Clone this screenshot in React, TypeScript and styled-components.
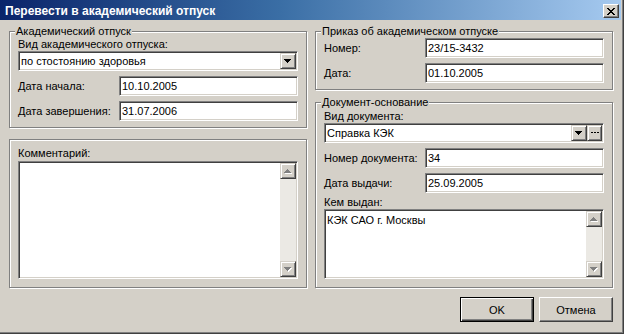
import React from 'react';
import styled, { createGlobalStyle } from 'styled-components';

const GlobalStyle = createGlobalStyle`
  html, body { margin: 0; padding: 0; background: #d4d0c8; }
  body { font-family: "Liberation Sans", Arial, sans-serif; font-size: 11px; color: #000; }
  * { box-sizing: border-box; }
`;

const Window = styled.div`
  width: 624px;
  height: 334px;
  display: flex;
  flex-direction: column;
  background: #d4d0c8;
  border-right: 1px solid #404040;
  border-bottom: 1px solid #404040;
  box-shadow: inset -1px -1px 0 #808080;
  padding-right: 2px;
  overflow: hidden;
`;

const TitleBar = styled.div`
  height: 20px;
  flex: none;
  display: flex;
  align-items: center;
  padding: 2px 2px 0 5px;
  background: linear-gradient(to right, #0a246a 0%, #3a6ea5 45%, #a6caf0 100%);
`;

const Title = styled.div`
  color: #fff;
  font-weight: bold;
  font-size: 12px;
  line-height: 14px;
  white-space: nowrap;
`;

const CloseButton = styled.button`
  margin-left: auto;
  width: 16px;
  height: 14px;
  padding: 0;
  display: flex;
  align-items: center;
  justify-content: center;
  background: #d4d0c8;
  border: 1px solid;
  border-color: #fff #404040 #404040 #fff;
  box-shadow: inset -1px -1px 0 #808080;
`;

const Body = styled.div`
  flex: 1;
  display: flex;
  flex-direction: column;
  padding: 5px 8px 0 9px;
`;

const Columns = styled.div`
  display: flex;
  gap: 8px;
  align-items: flex-start;
`;

const Column = styled.div`
  width: 298px;
  display: flex;
  flex-direction: column;
`;

const Group = styled.fieldset<{ $pt?: number; $pb: number; $mt?: number }>`
  margin: ${p => p.$mt ?? 0}px 0 0 0;
  min-width: 0;
  width: 298px;
  border: 1px solid #808080;
  box-shadow: 1px 1px 0 #fff, inset 1px 1px 0 #fff;
  padding: ${p => p.$pt ?? 0}px 8px ${p => p.$pb}px 8px;
  display: flex;
  flex-direction: column;
`;

const Legend = styled.legend`
  padding: 0 1px;
  margin-left: -3px;
  line-height: 13px;
  font-size: 11px;
  background: #d4d0c8;
`;

const Caption = styled.div<{ $mt?: number }>`
  margin-top: ${p => p.$mt ?? 0}px;
  line-height: 12px;
  white-space: nowrap;
`;

const Row = styled.div<{ $mt: number }>`
  margin-top: ${p => p.$mt}px;
  display: grid;
  grid-template-columns: 101px 1fr;
  align-items: center;
`;

const Label = styled.span`
  white-space: nowrap;
`;

const sunken = `
  background: #fff;
  border: 1px solid;
  border-color: #808080 #fff #fff #808080;
  box-shadow: inset 1px 1px 0 #404040, inset -1px -1px 0 #d4d0c8;
`;

const Input = styled.input`
  ${sunken}
  height: 20px;
  width: 100%;
  padding: 0 2px;
  font-family: inherit;
  font-size: 11px;
  color: #000;
  outline: none;
`;

const Combo = styled.div<{ $mt: number }>`
  ${sunken}
  margin-top: ${p => p.$mt}px;
  height: 20px;
  padding: 1px;
  display: flex;
  align-items: stretch;
`;

const ComboText = styled.div`
  flex: 1;
  padding-left: 1px;
  display: flex;
  align-items: center;
  white-space: nowrap;
`;

const raised = `
  background: #d4d0c8;
  border: 1px solid;
  border-color: #d4d0c8 #404040 #404040 #d4d0c8;
  box-shadow: inset 1px 1px 0 #fff, inset -1px -1px 0 #808080;
`;

const SmallButton = styled.div<{ $w: number }>`
  ${raised}
  width: ${p => p.$w}px;
  flex: none;
  display: flex;
  align-items: center;
  justify-content: center;
`;

const Memo = styled.div<{ $h: number; $mt: number }>`
  ${sunken}
  margin-top: ${p => p.$mt}px;
  height: ${p => p.$h}px;
  padding: 1px;
  display: flex;
`;

const MemoText = styled.div`
  flex: 1;
  padding: 2px 1px;
  line-height: 14px;
`;

const ScrollBar = styled.div`
  width: 16px;
  display: flex;
  flex-direction: column;
`;

const ScrollButton = styled.div`
  ${raised}
  height: 16px;
  flex: none;
  display: flex;
  align-items: center;
  justify-content: center;
`;

const Track = styled.div`
  flex: 1;
  background: #ebe9e4;
`;

const ButtonRow = styled.div`
  margin-top: 9px;
  display: flex;
  justify-content: flex-end;
  gap: 5px;
`;

const PushButton = styled.button<{ $default?: boolean }>`
  width: 74px;
  height: 25px;
  padding: 0;
  font-family: inherit;
  font-size: 11px;
  color: #000;
  background: #d4d0c8;
  border: 1px solid;
  border-color: ${p => (p.$default ? '#000' : '#fff #404040 #404040 #fff')};
  box-shadow: ${p =>
    p.$default
      ? 'inset 1px 1px 0 #fff, inset -1px -1px 0 #404040, inset -2px -2px 0 #808080'
      : 'inset -1px -1px 0 #808080'};
`;

const TriangleDown = ({ color = '#000', shadow }: { color?: string; shadow?: boolean }) => (
  <svg width="8" height="5" viewBox="0 0 8 5" shapeRendering="crispEdges">
    {shadow && <path d="M1 1h7v1H1z M2 2h5v1H2z M3 3h3v1H3z M4 4h1v1H4z" fill="#fff" />}
    <path d="M0 0h7v1H0z M1 1h5v1H1z M2 2h3v1H2z M3 3h1v1H3z" fill={color} />
  </svg>
);

const TriangleUp = ({ color = '#000', shadow }: { color?: string; shadow?: boolean }) => (
  <svg width="8" height="5" viewBox="0 0 8 5" shapeRendering="crispEdges">
    {shadow && <path d="M4 1h1v1H4z M3 2h3v1H3z M2 3h5v1H2z M1 4h7v1H1z" fill="#fff" />}
    <path d="M3 0h1v1H3z M2 1h3v1H2z M1 2h5v1H1z M0 3h7v1H0z" fill={color} />
  </svg>
);

const Dots = () => (
  <svg width="8" height="2" viewBox="0 0 8 2" shapeRendering="crispEdges">
    <path d="M0 0h2v1H0z M3 0h2v1H3z M6 0h2v1H6z" fill="#000" />
  </svg>
);

const CloseIcon = () => (
  <svg width="8" height="7" viewBox="0 0 8 7" shapeRendering="crispEdges">
    <path
      d="M0 0h2v1H0z M6 0h2v1H6z M1 1h2v1H1z M5 1h2v1H5z M2 2h4v1H2z M3 3h2v1H3z M2 4h4v1H2z M1 5h2v1H1z M5 5h2v1H5z M0 6h2v1H0z M6 6h2v1H6z"
      fill="#000"
    />
  </svg>
);

const Scroll = () => (
  <ScrollBar>
    <ScrollButton>
      <TriangleUp color="#808080" shadow />
    </ScrollButton>
    <Track />
    <ScrollButton>
      <TriangleDown color="#808080" shadow />
    </ScrollButton>
  </ScrollBar>
);

export default function App() {
  return (
    <>
      <GlobalStyle />
      <Window>
        <TitleBar>
          <Title>Перевести в академический отпуск</Title>
          <CloseButton aria-label="Закрыть">
            <CloseIcon />
          </CloseButton>
        </TitleBar>
        <Body>
          <Columns>
            <Column>
              <Group $pb={6}>
                <Legend>Академический отпуск</Legend>
                <Caption>Вид академического отпуска:</Caption>
                <Combo $mt={1}>
                  <ComboText>по стостоянию здоровья</ComboText>
                  <SmallButton $w={16}>
                    <TriangleDown />
                  </SmallButton>
                </Combo>
                <Row $mt={5}>
                  <Label>Дата начала:</Label>
                  <Input readOnly value="10.10.2005" />
                </Row>
                <Row $mt={5}>
                  <Label>Дата завершения:</Label>
                  <Input readOnly value="31.07.2006" />
                </Row>
              </Group>
              <Group $mt={11} $pt={7} $pb={8}>
                <Caption>Комментарий:</Caption>
                <Memo $mt={2} $h={118}>
                  <MemoText />
                  <Scroll />
                </Memo>
              </Group>
            </Column>
            <Column>
              <Group $pb={6}>
                <Legend>Приказ об академическом отпуске</Legend>
                <Row $mt={0}>
                  <Label>Номер:</Label>
                  <Input readOnly value="23/15-3432" />
                </Row>
                <Row $mt={5}>
                  <Label>Дата:</Label>
                  <Input readOnly value="01.10.2005" />
                </Row>
              </Group>
              <Group $mt={6} $pb={8}>
                <Legend>Документ-основание</Legend>
                <Caption $mt={1}>Вид документа:</Caption>
                <Combo $mt={1}>
                  <ComboText>Справка КЭК</ComboText>
                  <SmallButton $w={16}>
                    <TriangleDown />
                  </SmallButton>
                  <SmallButton $w={15}>
                    <Dots />
                  </SmallButton>
                </Combo>
                <Row $mt={5}>
                  <Label>Номер документа:</Label>
                  <Input readOnly value="34" />
                </Row>
                <Row $mt={5}>
                  <Label>Дата выдачи:</Label>
                  <Input readOnly value="25.09.2005" />
                </Row>
                <Caption $mt={3}>Кем выдан:</Caption>
                <Memo $mt={1} $h={70}>
                  <MemoText>КЭК САО г. Москвы</MemoText>
                  <Scroll />
                </Memo>
              </Group>
            </Column>
          </Columns>
          <ButtonRow>
            <PushButton $default>OK</PushButton>
            <PushButton>Отмена</PushButton>
          </ButtonRow>
        </Body>
      </Window>
    </>
  );
}
